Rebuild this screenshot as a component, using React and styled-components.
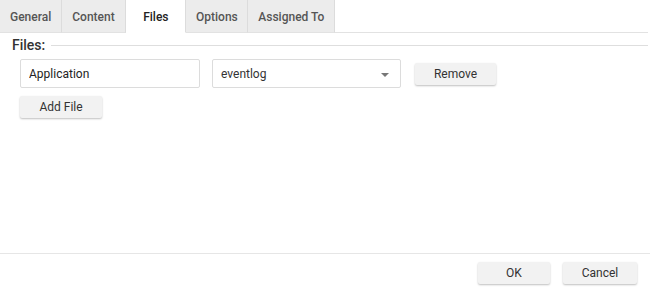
import styled, { createGlobalStyle } from "styled-components";

const GlobalStyle = createGlobalStyle`
  html, body {
    margin: 0;
    padding: 0;
    background: #fff;
  }
  body {
    font-family: Roboto, "Liberation Sans", sans-serif;
    font-size: 12px;
    color: #333;
  }
`;

const tabs = [
  { label: "General", pad: "10px 10px" },
  { label: "Content", pad: "10px 10.5px" },
  { label: "Files", pad: "17px 16.5px", active: true },
  { label: "Options", pad: "10px 9.5px" },
  { label: "Assigned To", pad: "10px 10px" },
];

export default function App() {
  return (
    <>
      <GlobalStyle />
      <Dialog>
        <TabBar>
          {tabs.map((t) => (
            <Tab key={t.label} active={t.active} pad={t.pad}>
              {t.label}
            </Tab>
          ))}
          <TabFill />
        </TabBar>
        <Body>
          <Fieldset>
            <Legend>Files:</Legend>
            <FileRow>
              <TextInput defaultValue="Application" />
              <Select>
                <span>eventlog</span>
                <Caret />
              </Select>
              <Button width="81px">Remove</Button>
            </FileRow>
            <Button width="82px">Add File</Button>
          </Fieldset>
        </Body>
        <Footer>
          <Button width="72px">OK</Button>
          <Button width="74px">Cancel</Button>
        </Footer>
      </Dialog>
    </>
  );
}

const Dialog = styled.div`
  width: 650px;
  height: 291px;
  display: flex;
  flex-direction: column;
  overflow: hidden;
`;

const TabBar = styled.div`
  display: flex;
  height: 33px;
  flex-shrink: 0;
`;

const Tab = styled.div`
  display: flex;
  align-items: center;
  box-sizing: border-box;
  height: 33px;
  padding-top: 1px;
  padding-left: ${({ pad }) => pad.split(" ")[0]};
  padding-right: ${({ pad }) => pad.split(" ")[1]};
  font-weight: 500;
  font-size: 12px;
  color: ${({ active }) => (active ? "#222" : "#555")};
  background: ${({ active }) => (active ? "#fff" : "#ececec")};
  border-right: 1px solid #dcdcdc;
  border-bottom: 1px solid ${({ active }) => (active ? "#fff" : "#e2e2e2")};
`;

const TabFill = styled.div`
  flex: 1;
  margin-right: 2px;
  border-bottom: 1px solid #e2e2e2;
`;

const Body = styled.div`
  flex: 1;
  padding: 4px 2px 0 12px;
`;

const Fieldset = styled.fieldset`
  margin: 0;
  padding: 6px 0 0 8px;
  border: none;
  border-top: 1px solid #dedede;
  min-width: 0;
`;

const Legend = styled.legend`
  padding: 0 6px 0 0;
  margin-left: -8px;
  font-weight: 500;
  font-size: 14px;
  color: #333;
`;

const FileRow = styled.div`
  display: flex;
  align-items: center;
  gap: 12px;
  margin-bottom: 8px;
`;

const TextInput = styled.input`
  box-sizing: border-box;
  width: 180px;
  height: 29px;
  padding: 0 8px;
  border: 1px solid #dcdcdc;
  border-radius: 2px;
  font-family: inherit;
  font-size: 12px;
  color: #222;
  outline: none;
`;

const Select = styled.div`
  box-sizing: border-box;
  width: 189px;
  height: 29px;
  padding: 0 11px 0 8px;
  display: flex;
  align-items: center;
  justify-content: space-between;
  border: 1px solid #dcdcdc;
  border-radius: 2px;
  color: #333;
  margin-right: 2px;
`;

const Caret = styled.span`
  width: 0;
  height: 0;
  border-left: 4px solid transparent;
  border-right: 4px solid transparent;
  border-top: 4px solid #777;
  margin-top: 2px;
`;

const Button = styled.button`
  box-sizing: border-box;
  width: ${({ width }) => width};
  height: 22px;
  padding: 0;
  border: none;
  border-radius: 2px;
  background: #f2f2f2;
  box-shadow: 0 1px 2px rgba(0, 0, 0, 0.25);
  font-family: inherit;
  font-size: 12px;
  color: #333;
`;

const Footer = styled.div`
  flex-shrink: 0;
  height: 37px;
  border-top: 1px solid #e6e6e6;
  display: flex;
  justify-content: flex-end;
  align-items: center;
  gap: 13px;
  padding: 0 13px 0 0;
`;
